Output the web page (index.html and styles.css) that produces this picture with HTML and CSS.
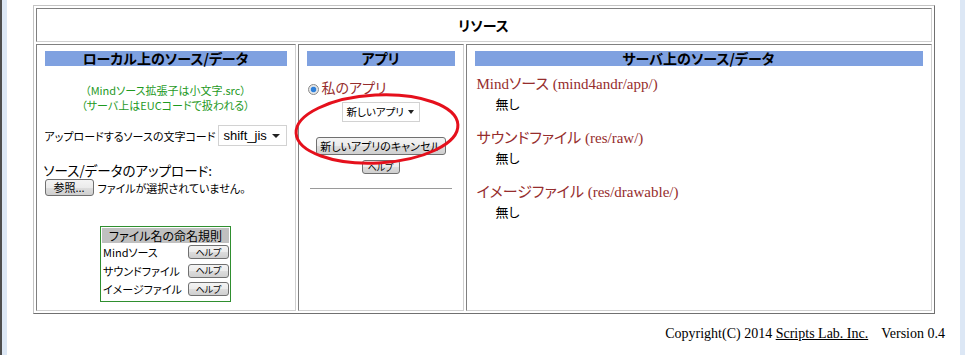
FILE: index.html
```html
<!DOCTYPE html>
<html lang="ja">
<head>
  <meta charset="UTF-8" />
  <title>リソース</title>
  <link rel="stylesheet" href="styles.css">
</head>
<body>
  <div class="window">
    <table class="frame">
      <colgroup>
        <col class="col-local">
        <col class="col-app">
        <col class="col-server">
      </colgroup>
      <tr>
        <td colspan="3" class="title">リソース</td>
      </tr>
      <tr>
        <!-- ローカル -->
        <td class="panel">
          <div class="bar">ローカル上のソース/データ</div>
          <div class="note">
            <div>（Mindソース拡張子は小文字.src）</div>
            <div>（サーバ上はEUCコードで扱われる）</div>
          </div>
          <div class="charset">
            <span class="charset-label">アップロードするソースの文字コード</span>
            <span class="select select-charset">shift_jis<i class="caret"></i></span>
          </div>
          <div class="upload-label">ソース/データのアップロード:</div>
          <div class="file-row">
            <button class="btn btn-browse">参照...</button>
            <span>ファイルが選択されていません。</span>
          </div>
          <div class="rules">
            <div class="rules-head">ファイル名の命名規則</div>
            <div class="rules-row"><span>Mindソース</span><button class="btn btn-help">ヘルプ</button></div>
            <div class="rules-row"><span>サウンドファイル</span><button class="btn btn-help">ヘルプ</button></div>
            <div class="rules-row"><span>イメージファイル</span><button class="btn btn-help">ヘルプ</button></div>
          </div>
        </td>

        <!-- アプリ -->
        <td class="panel panel-app">
          <div class="bar">アプリ</div>
          <label class="radio-row"><span class="radio"></span>私のアプリ</label>
          <div class="center">
            <span class="select select-app">新しいアプリ<i class="caret"></i></span>
          </div>
          <div class="center">
            <button class="btn btn-cancel">新しいアプリのキャンセル</button>
          </div>
          <div class="center">
            <button class="btn btn-apphelp">ヘルプ</button>
          </div>
          <hr class="rule">
          <svg class="mark" width="170" height="180" viewBox="0 0 170 180">
            <ellipse cx="78" cy="84" rx="81" ry="34" transform="rotate(-3 78 84)" fill="none" stroke="#e5101c" stroke-width="3"/>
          </svg>
        </td>

        <!-- サーバ -->
        <td class="panel">
          <div class="bar">サーバ上のソース/データ</div>
          <div class="server-list">
            <div class="server-title">Mindソース (mind4andr/app/)</div>
            <div class="server-item">無し</div>
            <div class="server-title">サウンドファイル (res/raw/)</div>
            <div class="server-item">無し</div>
            <div class="server-title">イメージファイル (res/drawable/)</div>
            <div class="server-item">無し</div>
          </div>
        </td>
      </tr>
    </table>

    <div class="footer">
      Copyright(C) 2014 <a href="#">Scripts Lab. Inc.</a><span class="version">Version 0.4</span>
    </div>
  </div>
</body>
</html>
```

FILE: styles.css
```css
* {
  box-sizing: border-box;
}

html {
  background: #fff;
}

body {
  margin: 0;
  border-left: 2px solid #4e4e4e;
  font-family: "Noto Sans CJK JP", "Liberation Sans", sans-serif;
  font-feature-settings: "palt";
  font-size: 12px;
  color: #000;
}

.window {
  min-height: 355px;
  border-left: 5px solid #dce7f5;
  border-right: 5px solid #dce7f5;
  padding-top: 5px;
}

/* 外枠テーブル */
.frame {
  width: 900px;
  margin: 0 auto;
  table-layout: fixed;
  border-collapse: separate;
  border-spacing: 2px;
  border: 1px solid;
  border-color: #c4c4c4 #707070 #707070 #c4c4c4;
}

.col-local { width: 260px; }
.col-app { width: 166px; }
.col-server { width: 466px; }

.frame td {
  border: 1px solid;
  border-color: #808080 #d0d0d0 #d0d0d0 #808080;
}

.title {
  height: 34px;
  text-align: center;
  font-weight: bold;
  font-size: 14px;
}

.panel {
  height: 267px;
  vertical-align: top;
  padding: 6px 8px;
}

.panel-app {
  position: relative;
}

.bar {
  background: #7fa1e0;
  height: 15px;
  line-height: 15px;
  text-align: center;
  font-weight: bold;
  font-size: 14px;
  white-space: nowrap;
}

/* ローカル */
.note {
  margin-top: 17px;
  color: #1f9a1f;
  text-align: center;
  font-size: 11px;
  line-height: 15px;
  white-space: nowrap;
}

.charset {
  display: flex;
  justify-content: center;
  align-items: center;
  gap: 3px;
  margin-top: 12px;
  font-size: 11px;
  line-height: 14px;
  white-space: nowrap;
}

.select {
  display: inline-flex;
  align-items: center;
  justify-content: space-between;
  background: #fff;
  border: 1px solid #d2d2d2;
  padding: 0 6px 0 4px;
  white-space: nowrap;
  vertical-align: top;
}

.select-charset {
  width: 70px;
  height: 21px;
  font-family: "Liberation Sans", sans-serif;
  font-size: 13px;
}

.caret {
  width: 0;
  height: 0;
  border-left: 4px solid transparent;
  border-right: 4px solid transparent;
  border-top: 4px solid #222;
}

.upload-label {
  margin-top: 16px;
  margin-left: -1px;
  font-size: 13.5px;
  line-height: 16px;
  white-space: nowrap;
}

.file-row {
  display: flex;
  align-items: center;
  gap: 4px;
  margin-top: 1px;
  font-size: 11px;
  line-height: 14px;
  white-space: nowrap;
}

.btn {
  font-family: "Noto Sans CJK JP", sans-serif;
  font-feature-settings: "palt";
  color: #000;
  padding: 0;
  border: 1px solid #707070;
  border-radius: 3px;
  background: linear-gradient(#f4f4f4, #ebebeb 50%, #dddddd 51%, #cfcfcf);
  line-height: 1;
  white-space: nowrap;
  vertical-align: top;
}

.btn-browse {
  width: 49px;
  height: 17px;
  font-size: 11px;
}

.rules {
  width: 131px;
  margin: 30px auto 0;
  border: 1px solid #2f8f2f;
  padding: 1px 1px 2px;
}

.rules-head {
  background: #c0c0c0;
  height: 15px;
  line-height: 15px;
  text-align: center;
  font-size: 12px;
}

.rules-row {
  display: flex;
  justify-content: space-between;
  align-items: center;
  height: 18.5px;
  padding-left: 1px;
  font-size: 11px;
  white-space: nowrap;
}

.btn-help {
  width: 41px;
  height: 14px;
  font-size: 9px;
}

/* アプリ */
.radio-row {
  display: flex;
  align-items: center;
  gap: 3px;
  margin-top: 14px;
  padding-left: 1px;
  color: #962d2d;
  font-family: "Liberation Serif", "Noto Sans CJK JP", serif;
  font-size: 14px;
  line-height: 18px;
}

.radio {
  width: 11px;
  height: 11px;
  border-radius: 50%;
  border: 1px solid #8a8a8a;
  background: radial-gradient(circle, #2f7fd8 0 2.5px, #bcd6ee 3px, #e6e6e6 3.5px);
}

.center {
  text-align: center;
  line-height: 0;
}

.select-app {
  width: 78px;
  height: 20px;
  margin-top: 4px;
  padding: 0 5px 0 4px;
  font-size: 10.5px;
  line-height: 18px;
}

.select-app .caret {
  border-left-width: 3.5px;
  border-right-width: 3.5px;
  border-top-width: 4px;
}

.btn-cancel {
  width: 130px;
  height: 18px;
  margin-top: 15px;
  font-size: 11px;
}

.btn-apphelp {
  width: 38px;
  height: 14px;
  margin-top: 5px;
  font-size: 9px;
}

.rule {
  width: 142px;
  margin: 14px auto 0;
  border: 0;
  border-top: 1px solid #9a9a9a;
}

.mark {
  position: absolute;
  left: 0;
  top: 0;
  overflow: visible;
  pointer-events: none;
}

/* サーバ */
.server-list {
  margin-top: 8px;
  padding-left: 2px;
}

.server-title {
  color: #962d2d;
  font-family: "Liberation Serif", "Noto Sans CJK JP", serif;
  font-size: 15px;
  line-height: 20px;
}

.server-item {
  padding-left: 19px;
  font-size: 13px;
  line-height: 20px;
  margin-bottom: 14px;
}

/* フッター */
.footer {
  margin-top: 12px;
  padding-right: 15px;
  text-align: right;
  font-family: "Liberation Serif", serif;
  font-size: 14px;
  line-height: 16px;
}

.footer a {
  color: #000;
}

.version {
  margin-left: 13px;
}
```
